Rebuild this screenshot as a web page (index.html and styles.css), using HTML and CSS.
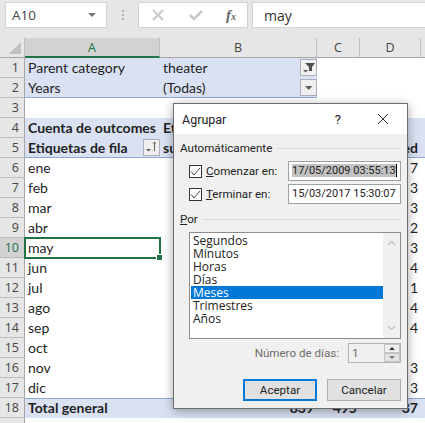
FILE: index.html
```html
<!DOCTYPE html>
<html lang="es">
<head>
    <meta charset="UTF-8">
    <title>Agrupar</title>
    <link rel="stylesheet" href="styles.css">
</head>
<body>
    <div class="toolbar">
        <div class="name-box">A10<span class="caret"></span></div>
        <div class="grip"></div>
        <div class="fx-box">
            <svg width="14" height="14" viewBox="0 0 14 14"><path d="M2 2l10 10M12 2L2 12" stroke="#c8c8c8" stroke-width="2" fill="none"/></svg>
            <svg width="14" height="14" viewBox="0 0 14 14"><path d="M1 7l4 4 8-8" stroke="#c8c8c8" stroke-width="2.500" fill="none"/></svg>
            <span class="fx-label">f<span class="fx-x">x</span></span>
        </div>
        <div class="formula">may</div>
    </div>

    <div class="sheet">
        <div class="corner"><span class="corner-mark"></span></div>
        <div class="col col-active">A</div>
        <div class="col">B</div>
        <div class="col">C</div>
        <div class="col">D</div>
        <div class="col-rest"></div>

        <div class="row-no">1</div>
        <div class="cell tint">Parent category</div>
        <div class="cell tint">theater<span class="drop"><svg width="15" height="15" viewBox="0 0 15 15"><path d="M4 3h10l-3 4v4H8V7z" fill="#505050"/><path d="M2 10h5l-2.500 2.500z" fill="#606060"/></svg></span></div>
        <div class="cell"></div><div class="cell"></div><div class="cell"></div>

        <div class="row-no">2</div>
        <div class="cell tint tint-end">Years</div>
        <div class="cell tint tint-end">(Todas)<span class="drop"><svg width="15" height="15" viewBox="0 0 15 15"><path d="M4 6h7.500l-3.750 4z" fill="#606060"/></svg></span></div>
        <div class="cell"></div><div class="cell"></div><div class="cell"></div>

        <div class="row-no">3</div>
        <div class="cell"></div><div class="cell"></div><div class="cell"></div><div class="cell"></div><div class="cell"></div>

        <div class="row-no">4</div>
        <div class="cell tint bold">Cuenta de outcomes</div>
        <div class="cell tint bold">Etiquetas de columna</div>
        <div class="cell tint"></div><div class="cell tint"></div><div class="cell tint"></div>

        <div class="row-no">5</div>
        <div class="cell tint tint-end bold">Etiquetas de fila<span class="drop"><svg width="15" height="15" viewBox="0 0 15 15"><path d="M2 9h5l-2.500 2.500z" fill="#606060"/><path d="M10.500 2v9M9 3.500L10.500 2 12 3.500" stroke="#606060" fill="none"/></svg></span></div>
        <div class="cell tint tint-end bold">successful</div>
        <div class="cell tint tint-end bold"></div>
        <div class="cell tint tint-end bold right">failed</div>
        <div class="cell tint tint-end"></div>

        <div class="row-no">6</div>
        <div class="cell">ene</div><div class="cell"></div><div class="cell"></div><div class="cell right">7</div><div class="cell"></div>
        <div class="row-no">7</div>
        <div class="cell">feb</div><div class="cell"></div><div class="cell"></div><div class="cell right">3</div><div class="cell"></div>
        <div class="row-no">8</div>
        <div class="cell">mar</div><div class="cell"></div><div class="cell"></div><div class="cell right">3</div><div class="cell"></div>
        <div class="row-no">9</div>
        <div class="cell">abr</div><div class="cell"></div><div class="cell"></div><div class="cell right">2</div><div class="cell"></div>
        <div class="row-no row-active">10</div>
        <div class="cell cell-active">may<span class="fill-handle"></span></div><div class="cell"></div><div class="cell"></div><div class="cell right">3</div><div class="cell"></div>
        <div class="row-no">11</div>
        <div class="cell">jun</div><div class="cell"></div><div class="cell"></div><div class="cell right">4</div><div class="cell"></div>
        <div class="row-no">12</div>
        <div class="cell">jul</div><div class="cell"></div><div class="cell"></div><div class="cell right">1</div><div class="cell"></div>
        <div class="row-no">13</div>
        <div class="cell">ago</div><div class="cell"></div><div class="cell"></div><div class="cell right">4</div><div class="cell"></div>
        <div class="row-no">14</div>
        <div class="cell">sep</div><div class="cell"></div><div class="cell"></div><div class="cell right">4</div><div class="cell"></div>
        <div class="row-no">15</div>
        <div class="cell">oct</div><div class="cell"></div><div class="cell"></div><div class="cell right"></div><div class="cell"></div>
        <div class="row-no">16</div>
        <div class="cell">nov</div><div class="cell"></div><div class="cell"></div><div class="cell right">3</div><div class="cell"></div>
        <div class="row-no">17</div>
        <div class="cell">dic</div><div class="cell"></div><div class="cell"></div><div class="cell right">3</div><div class="cell"></div>

        <div class="row-no">18</div>
        <div class="cell tint total bold">Total general</div>
        <div class="cell tint total bold right">839</div>
        <div class="cell tint total bold right">495</div>
        <div class="cell tint total bold right">37</div>
        <div class="cell tint total"></div>

        <div class="row-no"></div>
    </div>

    <div class="dialog">
        <div class="dialog-head">
            <span class="dialog-title">Agrupar</span>
            <span class="dialog-help">?</span>
            <svg class="dialog-close" width="12" height="12" viewBox="0 0 12 12"><path d="M1 1l10 10M11 1L1 11" stroke="#333" fill="none"/></svg>
        </div>
        <div class="dialog-body">
            <div class="legend"><span>Automáticamente</span></div>
            <div class="date-row">
                <span class="check"><svg width="13" height="13" viewBox="0 0 13 13"><path d="M2 6.500l3 3.500 6-7" stroke="#444" fill="none"/></svg></span>
                <label class="date-label"><u>C</u>omenzar en:</label>
                <div class="date-input"><span class="selected">17/05/2009 03:55:13</span></div>
            </div>
            <div class="date-row">
                <span class="check"><svg width="13" height="13" viewBox="0 0 13 13"><path d="M2 6.500l3 3.500 6-7" stroke="#444" fill="none"/></svg></span>
                <label class="date-label"><u>T</u>erminar en:</label>
                <div class="date-input">15/03/2017 15:30:07</div>
            </div>
            <div class="legend legend-por"><span><u>P</u>or</span></div>
            <div class="list">
                <div class="list-items">
                    <div class="list-item">Segundos</div>
                    <div class="list-item">Minutos</div>
                    <div class="list-item">Horas</div>
                    <div class="list-item">Días</div>
                    <div class="list-item list-selected">Meses</div>
                    <div class="list-item">Trimestres</div>
                    <div class="list-item">Años</div>
                </div>
                <div class="scrollbar">
                    <svg width="9" height="6" viewBox="0 0 9 6"><path d="M1 5l3.500-3.500L8 5" stroke="#c4c4c4" stroke-width="1.500" fill="none"/></svg>
                    <svg width="9" height="6" viewBox="0 0 9 6"><path d="M1 1l3.500 3.500L8 1" stroke="#c4c4c4" stroke-width="1.500" fill="none"/></svg>
                </div>
            </div>
            <div class="days-row">
                <span class="days-label">Número de días:</span>
                <div class="spin">
                    <span class="spin-value">1</span>
                    <div class="spin-btns">
                        <span class="spin-btn"><i class="tri-up"></i></span>
                        <span class="spin-btn spin-btn-off"><i class="tri-down"></i></span>
                    </div>
                </div>
            </div>
            <div class="dialog-btns">
                <button class="btn btn-default">Aceptar</button>
                <button class="btn">Cancelar</button>
            </div>
        </div>
    </div>
</body>
</html>
```

FILE: styles.css
```css
html, body {
    margin: 0;
    padding: 0;
}
body {
    width: 425px;
    height: 423px;
    overflow: hidden;
    position: relative;
    background-color: #fff;
    font-family: Lato, "Open Sans", sans-serif;
    font-size: 14px;
    color: #1f1f1f;
}

/* formula bar */
.toolbar {
    height: 38px;
    box-sizing: border-box;
    padding: 2px 0 0 5px;
    background-color: #e6e6e6;
    display: flex;
    align-items: flex-start;
}
.name-box, .fx-box, .formula {
    height: 26px;
    box-sizing: border-box;
    background-color: #fff;
    border: 1px solid #d4d4d4;
    display: flex;
    align-items: center;
}
.name-box {
    width: 102px;
    padding: 0 10px 0 6px;
    justify-content: space-between;
    font-family: "Open Sans", sans-serif;
    font-size: 13.500px;
    color: #444;
}
.caret {
    border-left: 4px solid transparent;
    border-right: 4px solid transparent;
    border-top: 4px solid #777;
}
.grip {
    width: 2px;
    height: 10px;
    margin: 8px 14px 0 15px;
    background: repeating-linear-gradient(to bottom, #b0b0b0 0, #b0b0b0 2px, transparent 2px, transparent 4px);
}
.fx-box {
    width: 110px;
    padding: 0 11px 0 12px;
    justify-content: space-between;
}
.fx-label {
    font-family: "Liberation Serif", serif;
    font-style: italic;
    font-weight: bold;
    font-size: 15px;
    color: #666;
}
.fx-x {
    font-size: 10px;
}
.formula {
    flex: 1;
    margin-left: 4px;
    padding-left: 11px;
    border-right: 0;
    font-family: "Open Sans", sans-serif;
    font-size: 14px;
    color: #333;
}

/* sheet */
.sheet {
    display: grid;
    grid-template-columns: 25px 135px 157px 43px 61px 4px;
    grid-auto-rows: 20px;
}
.corner, .col, .col-rest {
    background-color: #e6e6e6;
    border-right: 1px solid #bdbdbd;
    border-bottom: 1px solid #a6a6a6;
    box-sizing: border-box;
    display: flex;
    align-items: center;
    justify-content: center;
    font-family: "Open Sans", sans-serif;
    font-size: 12.500px;
    color: #444;
}
.col-rest {
    border-right: 0;
}
.corner {
    position: relative;
}
.corner-mark {
    position: absolute;
    right: 3px;
    bottom: 3px;
    border-left: 12px solid transparent;
    border-bottom: 12px solid #c0c0c0;
}
.col-active {
    background-color: #d2d2d2;
    border-bottom: 2px solid #217346;
    color: #217346;
}
.row-no {
    background-color: #e6e6e6;
    border-right: 1px solid #a6a6a6;
    border-bottom: 1px solid #bdbdbd;
    box-sizing: border-box;
    padding-right: 5px;
    text-align: right;
    font-family: "Open Sans", sans-serif;
    font-size: 12.500px;
    line-height: 19px;
    color: #444;
}
.row-active {
    background-color: #d2d2d2;
    color: #217346;
}
.cell {
    box-sizing: border-box;
    padding: 0 3px;
    position: relative;
    line-height: 20px;
    white-space: nowrap;
    min-width: 0;
}
.tint {
    background-color: #d9e1f2;
}
.tint-end {
    border-bottom: 1px solid #8ea9db;
}
.total {
    border-top: 1px solid #8ea9db;
    line-height: 18px;
}
.bold {
    font-weight: bold;
}
.right {
    text-align: right;
}
.drop {
    position: absolute;
    right: 0;
    top: 1px;
    width: 17px;
    height: 17px;
    box-sizing: border-box;
    background-color: #f0f0f0;
    border: 1px solid #a9b0bd;
    display: flex;
}
.cell-active {
    outline: 2px solid #217346;
    outline-offset: -1px;
    z-index: 1;
}
.fill-handle {
    position: absolute;
    right: -3px;
    bottom: -3px;
    width: 5px;
    height: 5px;
    background-color: #217346;
    border: 1px solid #fff;
}

/* dialog */
.dialog {
    position: absolute;
    left: 173px;
    top: 103px;
    width: 235px;
    height: 306px;
    box-sizing: border-box;
    background-color: #f0f0f0;
    border: 1px solid #6d6d6d;
    box-shadow: 0 2px 10px rgba(0, 0, 0, 0.35);
    font-family: Roboto, sans-serif;
    font-size: 11.600px;
    color: #222;
    z-index: 2;
}
.dialog-head {
    height: 30px;
    background-color: #fff;
    display: flex;
    align-items: center;
    padding-left: 8px;
}
.dialog-title {
    flex: 1;
    font-size: 12.500px;
}
.dialog-help {
    margin-right: 36px;
    font-size: 13px;
}
.dialog-close {
    margin-right: 18px;
}
.dialog-body {
    padding: 5px 6px 0 6px;
}
.legend {
    display: flex;
    align-items: center;
    gap: 5px;
    height: 18px;
}
.legend::after {
    content: "";
    flex: 1;
    height: 1px;
    background-color: #d8d8d8;
}
.date-row {
    display: flex;
    align-items: center;
    height: 20px;
    margin-top: 4px;
    padding-left: 9px;
}
.date-row + .date-row {
    margin-top: 3px;
}
.check {
    width: 13px;
    height: 13px;
    box-sizing: border-box;
    background-color: #fff;
    border: 1px solid #333;
    display: flex;
    margin-right: 4px;
}
.check svg {
    margin: -1px;
    flex: none;
}
.date-label {
    flex: 1;
}
.date-input {
    width: 113px;
    height: 20px;
    box-sizing: border-box;
    padding: 0 3px;
    background-color: #fff;
    border: 1px solid #a0a0a0;
    font-size: 11px;
    line-height: 18px;
    white-space: nowrap;
}
.selected {
    background-color: #c2c2c2;
    border-right: 1px solid #000;
}
.legend-por {
    margin-top: 6px;
}
.list {
    margin: 4px 0 0 9px;
    height: 107px;
    box-sizing: border-box;
    background-color: #fff;
    border: 1px solid #8c8c8c;
    display: flex;
    padding: 1px;
}
.list-items {
    flex: 1;
}
.list-item {
    height: 13px;
    line-height: 13px;
    padding-left: 2px;
    font-family: "Open Sans", sans-serif;
    font-size: 12px;
}
.list-selected {
    background-color: #0078d7;
    color: #fff;
}
.scrollbar {
    width: 17px;
    background-color: #f0f0f0;
    display: flex;
    flex-direction: column;
    justify-content: space-between;
    align-items: center;
    padding: 7px 0;
    margin: -1px -1px -1px 0;
    box-sizing: border-box;
}
.days-row {
    display: flex;
    justify-content: flex-end;
    align-items: center;
    gap: 9px;
    margin-top: 4px;
    color: #6d6d6d;
}
.spin {
    width: 53px;
    height: 20px;
    box-sizing: border-box;
    background-color: #f0f0f0;
    border: 1px solid #b4b4b4;
    display: flex;
    justify-content: space-between;
    padding-left: 3px;
    line-height: 18px;
}
.spin-btns {
    width: 16px;
    display: flex;
    flex-direction: column;
}
.spin-btn {
    flex: 1;
    background-color: #f0f0f0;
    border: 1px solid #c4c4c4;
    display: flex;
    align-items: center;
    justify-content: center;
}
.spin-btn-off {
    background-color: #e4e4e4;
}
.tri-up {
    border-left: 3px solid transparent;
    border-right: 3px solid transparent;
    border-bottom: 3px solid #333;
}
.tri-down {
    border-left: 3px solid transparent;
    border-right: 3px solid transparent;
    border-top: 3px solid #777;
}
.dialog-btns {
    display: flex;
    justify-content: flex-end;
    gap: 10px;
    margin-top: 16px;
}
.btn {
    width: 74px;
    height: 22px;
    box-sizing: border-box;
    background-color: #e1e1e1;
    border: 1px solid #adadad;
    font-family: Roboto, sans-serif;
    font-size: 11.600px;
    color: #222;
    padding: 0;
}
.btn-default {
    border: 2px solid #0078d7;
}
```
